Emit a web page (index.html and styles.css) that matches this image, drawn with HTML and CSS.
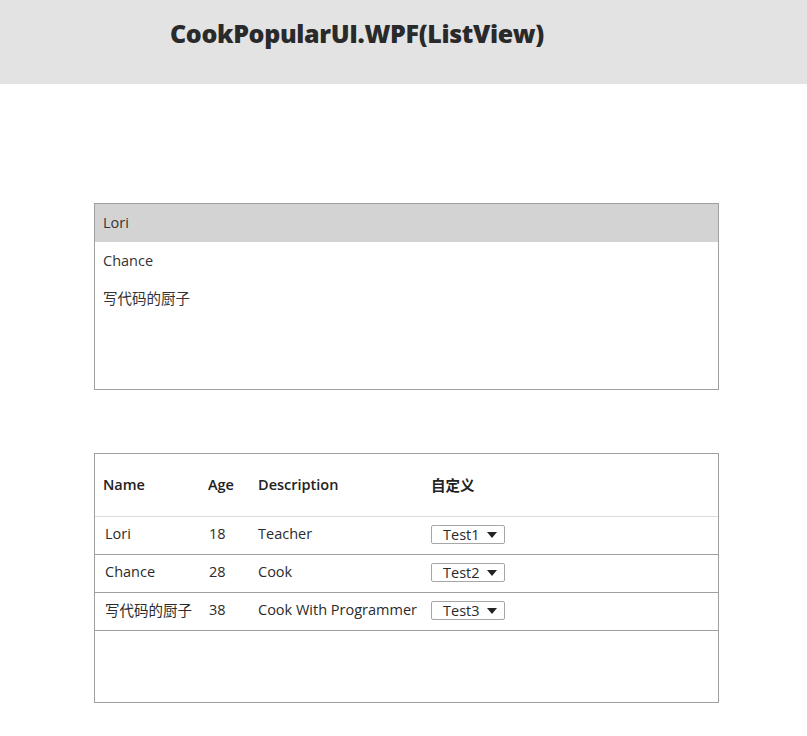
FILE: index.html
```html
<!DOCTYPE html>
<html lang="zh-CN">
<head>
<meta charset="utf-8">
<title>CookPopularUI.WPF(ListView)</title>
<link rel="stylesheet" href="styles.css">
</head>
<body>
<header class="titlebar">
  <h1 class="title">CookPopularUI.WPF(ListView)</h1>
</header>
<main class="content">
  <ul class="listbox">
    <li class="item selected">Lori</li>
    <li class="item">Chance</li>
    <li class="item">写代码的厨子</li>
  </ul>
  <div class="gridview">
    <div class="row head">
      <div class="cell">Name</div>
      <div class="cell">Age</div>
      <div class="cell">Description</div>
      <div class="cell">自定义</div>
    </div>
    <div class="row">
      <div class="cell txt name">Lori</div>
      <div class="cell txt age">18</div>
      <div class="cell txt">Teacher</div>
      <div class="cell"><div class="combo"><span class="combo-text">Test1</span><span class="arrow"></span></div></div>
    </div>
    <div class="row">
      <div class="cell txt name">Chance</div>
      <div class="cell txt age">28</div>
      <div class="cell txt">Cook</div>
      <div class="cell"><div class="combo"><span class="combo-text">Test2</span><span class="arrow"></span></div></div>
    </div>
    <div class="row">
      <div class="cell txt name">写代码的厨子</div>
      <div class="cell txt age">38</div>
      <div class="cell txt">Cook With Programmer</div>
      <div class="cell"><div class="combo"><span class="combo-text">Test3</span><span class="arrow"></span></div></div>
    </div>
  </div>
</main>
</body>
</html>
```
FILE: styles.css
```css
* { box-sizing: border-box; }
html, body { margin: 0; padding: 0; background: #ffffff; }
body {
  font-family: "Open Sans", "Noto Sans CJK SC", sans-serif;
  font-size: 14.5px;
  color: #2b2b2b;
}
.titlebar {
  height: 84px;
  background: #e3e3e3;
  padding-left: 170px;
  padding-top: 16px;
}
.title {
  margin: 0;
  font-family: "Open Sans", sans-serif;
  font-weight: 800;
  font-size: 25px;
  line-height: 34px;
  color: #2a2a2a;
  letter-spacing: -0.35px;
}
.content {
  margin-left: 94px;
  width: 625px;
  padding-top: 119px;
}
.listbox {
  list-style: none;
  margin: 0;
  padding: 0;
  height: 187px;
  border: 1px solid #a0a0a0;
}
.item {
  height: 38px;
  line-height: 38px;
  padding-left: 8px;
  color: #333;
}
.item.selected { background: #d3d3d3; }
.gridview {
  margin-top: 63px;
  height: 250px;
  border: 1px solid #a0a0a0;
}
.row {
  display: grid;
  grid-template-columns: 105px 50px 173px 1fr;
  align-items: center;
  height: 38px;
  padding-left: 8px;
  border-bottom: 1px solid #a0a0a0;
}
.row.head {
  height: 63px;
  font-weight: 600;
  color: #222;
  border-bottom-color: #dcdcdc;
  padding-bottom: 2px;
}
.cell.txt { padding-bottom: 5px; }
.cell.name { padding-left: 2px; }
.cell.age { padding-left: 1px; }
.combo {
  display: flex;
  align-items: center;
  width: 74px;
  height: 19px;
  border: 1px solid #a6a6a6;
  border-radius: 2px;
  padding-left: 11px;
  line-height: 17px;
  margin-bottom: 2px;
}
.combo-text { flex: 1; }
.arrow {
  width: 0;
  height: 0;
  border-left: 5px solid transparent;
  border-right: 5px solid transparent;
  border-top: 6px solid #222;
  margin-right: 7px;
}
```
